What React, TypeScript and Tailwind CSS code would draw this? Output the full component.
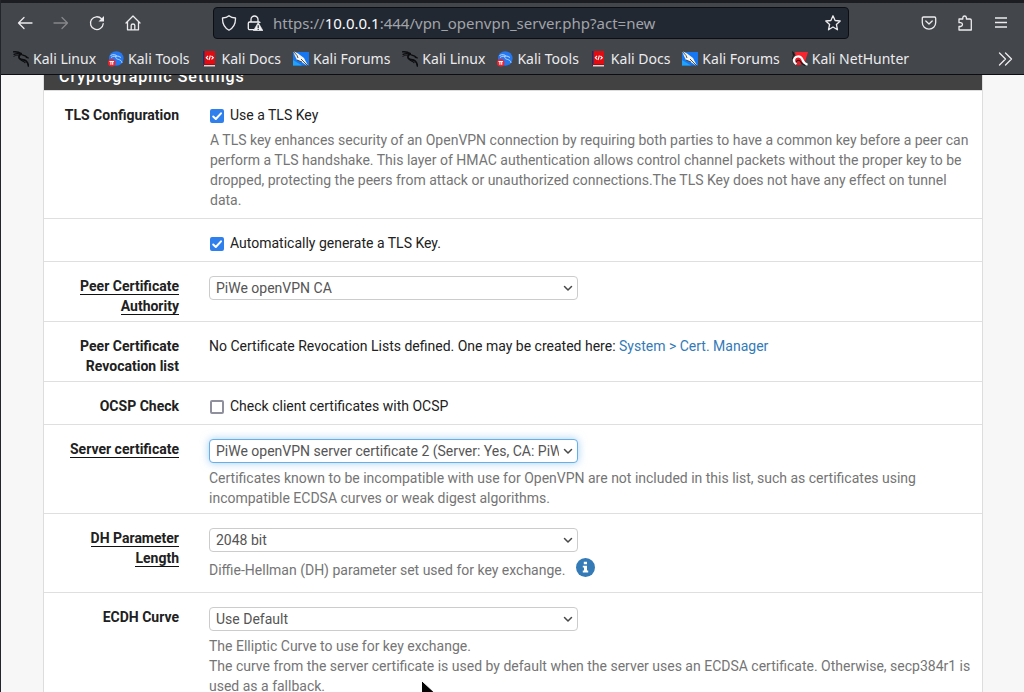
import React from "react";

type BookmarkKind = "linux" | "tools" | "docs" | "forums" | "nethunter";

function DragonIcon() {
  return (
    <svg viewBox="0 0 16 16" className="size-4 shrink-0" aria-hidden="true" fill="none" stroke="#0c0d10" strokeLinecap="round">
      <path d="M0 .9C3 .5 6 1 8.300 2.800" strokeWidth="1.300" />
      <path d="M1 3.300C3.500 2.400 6 2.600 8.500 3.300" strokeWidth="1.300" />
      <path d="M.8 5.300C2.800 4 5 4 6.800 4.400" strokeWidth=".8" />
      <path d="M8 2.500C6 4.200 5.300 6.200 6.600 7.600C8 9 11 8.200 13 9.800C14.700 11.200 15.200 13 15.500 15" strokeWidth="1.700" />
      <path d="M8 3.500C10 4.300 12.500 4.400 14.400 6.300M13.200 6.500L15.300 6.800M7 7.500C8 10.500 10.500 9.800 12 11.500" strokeWidth="1.200" />
    </svg>
  );
}

function ToolsIcon() {
  return (
    <svg viewBox="0 0 16 16" className="size-4 shrink-0" aria-hidden="true">
      <circle cx="8.300" cy="7.500" r="7.300" fill="#2478f2" />
      <path d="M2.500 4.500C5 3 8 3.500 9.500 5.500M3 6.500C5 5 7 5 8.500 5.500M8 5C7 8 9.500 8 11.500 8.800S14 11 14 12M9.500 4.800L13 6.500" fill="none" stroke="#c9e0ff" strokeWidth=".9" />
      <circle cx="3.800" cy="11.800" r="3.800" fill="#ed2430" />
      <path d="M1.500 10.500H6M2.900 10.500V13.800M4.700 10.500V13.800" stroke="#fff" strokeWidth="1.100" />
    </svg>
  );
}

function DocsIcon() {
  return (
    <svg viewBox="0 0 16 16" className="size-4 shrink-0" aria-hidden="true">
      <path d="M1 0H3V15H1Z" fill="#14316b" />
      <path d="M2.500 0H13V13H2.500Z" fill="#e20b12" />
      <path d="M2 13.500H13V15.500H2Z" fill="#d5d5d8" />
      <path d="M1 13H13V14H1Z" fill="#9b1018" />
      <path d="M6 5L4.300 6.700L6 8.400M9.500 5L11.300 6.700L9.500 8.400M8.400 4.500L7 9" fill="none" stroke="#fff" strokeWidth="1.100" />
    </svg>
  );
}

function ForumsIcon() {
  return (
    <svg viewBox="0 0 16 16" className="size-4 shrink-0" aria-hidden="true">
      <path d="M0 1H16V14.500H0Z" fill="#1777f2" />
      <path d="M0 14.500V9L9 14.500Z" fill="#20a3f8" />
      <path d="M0 0L5 2.500L11 7L12.500 10L15.500 15.500L9.500 11.500L4 9L2 5Z" fill="#f5f5f3" />
      <path d="M0 0L4 4.500L5 7M8 8L15.500 15.500M4 9L9 11" stroke="#242424" strokeWidth=".8" fill="none" />
    </svg>
  );
}

function NetHunterIcon() {
  return (
    <svg viewBox="0 0 16 16" className="size-4 shrink-0" aria-hidden="true">
      <path d="M3 1H16L12.500 12L8 7H4Z" fill="#f8252f" />
      <path d="M0 0L2 1.500L2.500 4L1 5" fill="#171819" />
      <path d="M3 3.500C1.500 4.500.5 6 .5 8" fill="none" stroke="#171819" strokeWidth="1" />
      <circle cx="6.500" cy="9" r="5.200" fill="#e51b28" />
      <path d="M4.500 13C.5 10.500 1.500 6.500 5.500 5.500C9.500 5 10.300 8 11 10C11.800 12 13.200 13 15.500 13.700" fill="none" stroke="#fff" strokeWidth="2.200" />
      <path d="M4 11.500C5 9 7.500 8.500 8.500 10.500S10.500 13.500 13 14.500" fill="none" stroke="#171819" strokeWidth="1.100" />
    </svg>
  );
}

const bookmarkIcons: Record<BookmarkKind, React.ReactElement> = {
  linux: <DragonIcon />,
  tools: <ToolsIcon />,
  docs: <DocsIcon />,
  forums: <ForumsIcon />,
  nethunter: <NetHunterIcon />,
};

const bookmarks: { kind: BookmarkKind; text: string }[] = [
  { kind: "linux", text: "Kali Linux" },
  { kind: "tools", text: "Kali Tools" },
  { kind: "docs", text: "Kali Docs" },
  { kind: "forums", text: "Kali Forums" },
  { kind: "linux", text: "Kali Linux" },
  { kind: "tools", text: "Kali Tools" },
  { kind: "docs", text: "Kali Docs" },
  { kind: "forums", text: "Kali Forums" },
  { kind: "nethunter", text: "Kali NetHunter" },
];

function LineIcon({ children }: { children: React.ReactNode }) {
  return (
    <svg viewBox="0 0 16 16" className="size-4 shrink-0" fill="none" stroke="currentColor" strokeWidth="1.300" strokeLinecap="round" strokeLinejoin="round" aria-hidden="true">
      {children}
    </svg>
  );
}

function BrowserChrome() {
  return (
    <header className="shrink-0 border-t-3 border-b border-t-[#1b1d23] border-b-[#0c0d11] bg-[#43464b] font-['Noto_Sans',sans-serif] text-[#ececee]">
      <div className="flex h-10 items-center pr-[15px] pl-4">
        <div className="flex w-[196px] shrink-0 items-center gap-5">
          <button aria-label="Back">
            <LineIcon><path d="M15 8H1.500M7 2.500L1.500 8L7 13.500" /></LineIcon>
          </button>
          <button aria-label="Forward" className="text-[#85878b]">
            <LineIcon><path d="M1 8H14.500M9 2.500L14.500 8L9 13.500" /></LineIcon>
          </button>
          <button aria-label="Reload">
            <LineIcon>
              <path d="M14.200 8.700A6.400 6.400 0 1 1 12.500 3.800" />
              <path d="M15 1V6.500H9.500Z" fill="currentColor" stroke="none" />
            </LineIcon>
          </button>
          <button aria-label="Home">
            <LineIcon><path d="M1 8L8 1L15 8M2.500 7V14.800H13.500V7M6.200 14.500V10.200Q6.200 9 8 9T9.800 10.200V14.500" /></LineIcon>
          </button>
        </div>
        <div className="flex h-8 w-[636px] min-w-0 items-center gap-2.5 rounded border border-[#0c0e13] bg-[#222831] px-[7px]">
          <LineIcon><path d="M8 .8C6.500 2.200 4 3 1.500 3C1.300 8.500 3 12.500 8 15.200C13 12.500 14.700 8.500 14.500 3C12 3 9.500 2.200 8 .8Z" /></LineIcon>
          <svg viewBox="0 0 16 16" className="size-4 shrink-0" aria-hidden="true">
            <path d="M4 7V4.500A3.500 3.500 0 0 1 11 4.500V7M7 14.600H2.800Q1.300 14.600 1.300 13.200V8.300Q1.300 7 2.700 7H12Q13 7 13 8" fill="none" stroke="#f0f0f2" strokeWidth="1.300" />
            <path d="M11.200 7.500L16 15.800H6.400Z" fill="#f0f0f2" stroke="#f0f0f2" strokeWidth=".6" strokeLinejoin="round" />
            <path d="M11.200 10.200V12.900M11.200 13.700V14.900" stroke="#222831" strokeWidth="1.200" />
          </svg>
          <span className="grow truncate text-[15px] leading-5 text-[#a1a4aa]">
            https://<span className="text-[#fbfbfe]">10.0.0.1</span>:444/vpn_openvpn_server.php?act=new
          </span>
          <button aria-label="Bookmark this page">
            <LineIcon><path d="M8 .8L10.100 5.500L15.200 6L11.400 9.500L12.500 14.800L8 12L3.500 14.800L4.600 9.500L.8 6L5.900 5.500Z" /></LineIcon>
          </button>
        </div>
        <div className="ml-auto flex shrink-0 items-center gap-5">
          <button aria-label="Save to Pocket">
            <LineIcon><path d="M2.500 2H13.500Q14.700 2 14.700 3.200V7.500A6.700 6.700 0 0 1 1.300 7.500V3.200Q1.300 2 2.500 2ZM4.800 6L8 9L11.200 6" /></LineIcon>
          </button>
          <button aria-label="Extensions">
            <LineIcon><path d="M2 4H5.800V2.700Q6 1 7.600 1T9.400 2.700V4H13Q14.300 4 14.300 5.200V15H2V11.500H3.600Q5.500 11.300 5.500 9.600T3.600 7.700H2V4" /></LineIcon>
          </button>
          <button aria-label="Open menu">
            <LineIcon><path d="M2 3H14M2 7.500H14M2 12H14" strokeLinecap="butt" /></LineIcon>
          </button>
        </div>
      </div>
      <nav aria-label="Bookmarks" className="flex h-[31px] items-center pr-[11px] pl-3 text-[14px] leading-5">
        <div className="flex min-w-0 grow gap-3 overflow-hidden">
          {bookmarks.map((b, i) => (
            <a key={i} href="#" className="flex shrink-0 items-center gap-1 whitespace-nowrap">
              {bookmarkIcons[b.kind]}
              {b.text}
            </a>
          ))}
        </div>
        <button aria-label="More bookmarks">
          <LineIcon><path d="M2.500 2L8.500 8L2.500 14M8.500 2L14.500 8L8.500 14" /></LineIcon>
        </button>
      </nav>
    </header>
  );
}

function Row({ label, htmlFor, required, tight, children }: {
  label?: string;
  htmlFor?: string;
  required?: boolean;
  tight?: boolean;
  children: React.ReactNode;
}) {
  const text = <span className={required ? "border-b border-[#111111]" : ""}>{label}</span>;
  return (
    <div className={`flex gap-[30px] border-b border-[#dfdfdf] pt-3.5 pr-2 ${tight ? "pb-[5px]" : "pb-2"}`}>
      <div className="w-[135px] shrink-0 pl-5 text-right font-bold">
        {htmlFor ? <label htmlFor={htmlFor}>{text}</label> : text}
      </div>
      <div className="min-w-0 grow">{children}</div>
    </div>
  );
}

function Check({ label, checked }: { label: string; checked?: boolean }) {
  return (
    <label className="flex items-center gap-1.5 pl-px">
      <span className="grid size-3.5 shrink-0 translate-y-px">
        <input
          type="checkbox"
          defaultChecked={checked}
          className="peer col-start-1 row-start-1 size-3.5 appearance-none rounded-xs border-2 border-[#8f8f9d] bg-white checked:border-[#2f80ed] checked:bg-[#2f80ed]"
        />
        <svg viewBox="0 0 14 14" className="pointer-events-none invisible col-start-1 row-start-1 size-3.5 peer-checked:visible" fill="none" stroke="#fff" strokeWidth="2" strokeLinecap="round" strokeLinejoin="round" aria-hidden="true">
          <path d="M3.200 7.500L5.800 10L11 4.300" />
        </svg>
      </span>
      {label}
    </label>
  );
}

function Select({ id, value, active }: { id: string; value: string; active?: boolean }) {
  return (
    <div className="grid w-[369px] max-w-full items-center">
      <select
        id={id}
        className={`col-start-1 row-start-1 h-6 w-full appearance-none rounded border bg-white pr-[18px] pl-1.5 text-[14px] text-[#555555] outline-none ${active ? "border-[#66afe9] shadow-[0_0_8px_rgba(102,175,233,0.6)]" : "border-[#cccccc]"}`}
      >
        <option>{value}</option>
      </select>
      <svg viewBox="0 0 10 10" className="pointer-events-none col-start-1 row-start-1 mr-[5px] size-2.5 justify-self-end" fill="none" stroke="#484848" strokeWidth="1.500" strokeLinecap="round" strokeLinejoin="round" aria-hidden="true">
        <path d="M1.500 3.500L5 7L8.500 3.500" />
      </svg>
    </div>
  );
}

export default function App() {
  return (
    <div className="flex h-screen flex-col overflow-hidden border-l border-[#22252c] bg-[#f7f7f7] font-[Roboto,sans-serif] text-[14px] leading-5 text-[#212121]">
      <BrowserChrome />
      <main className="min-h-0 grow overflow-hidden pr-[41px] pl-[42px]">
        <section className="-mt-2 border-x border-[#dddddd] bg-white">
          <h2 className="h-[23px] bg-[#424242] px-[15px] text-[16px] leading-5 font-medium tracking-[1px] text-white">
            Cryptographic Settings
          </h2>
          <div className="border-t border-[#dddddd]">
            <Row label="TLS Configuration">
              <Check label="Use a TLS Key" checked />
              <p className="mt-[5px] pl-px text-[#757575]">
                A TLS key enhances security of an OpenVPN connection by requiring both parties to have a common key before a peer can perform a TLS handshake. This layer of HMAC authentication allows control channel packets without the proper key to be dropped, protecting the peers from attack or unauthorized connections.The TLS Key does not have any effect on tunnel data.
              </p>
            </Row>
            <Row>
              <Check label="Automatically generate a TLS Key." checked />
            </Row>
            <Row label="Peer Certificate Authority" htmlFor="peer-ca" required tight>
              <Select id="peer-ca" value="PiWe openVPN CA" />
            </Row>
            <Row label="Peer Certificate Revocation list" tight>
              No Certificate Revocation Lists defined. One may be created here:{" "}
              <a href="#" className="text-[#337ab7]">System &gt; Cert. Manager</a>
            </Row>
            <Row label="OCSP Check">
              <Check label="Check client certificates with OCSP" />
            </Row>
            <Row label="Server certificate" htmlFor="server-cert" required tight>
              <Select id="server-cert" value="PiWe openVPN server certificate 2 (Server: Yes, CA: PiWe openVPN CA)" active />
              <p className="mt-[5px] text-[#757575]">
                Certificates known to be incompatible with use for OpenVPN are not included in this list, such as certificates using incompatible ECDSA curves or weak digest algorithms.
              </p>
            </Row>
            <Row label="DH Parameter Length" htmlFor="dh-length" required>
              <Select id="dh-length" value="2048 bit" />
              <div className="mt-[5px] flex h-[27px] items-start gap-2.5 text-[#757575]">
                <p className="pt-[3px]">Diffie-Hellman (DH) parameter set used for key exchange.</p>
                <button aria-label="More information">
                  <svg viewBox="0 0 20 20" className="size-5" aria-hidden="true">
                    <circle cx="10.500" cy="10.500" r="9.500" fill="#337ab7" />
                    <path d="M8.800 4.700H12V7.200H8.800ZM7.800 8.700H12V13.500H13.200V15.500H7.800V13.500H9V10.500H7.800Z" fill="#fff" />
                  </svg>
                </button>
              </div>
            </Row>
            <Row label="ECDH Curve" htmlFor="ecdh-curve">
              <Select id="ecdh-curve" value="Use Default" />
              <p className="mt-[5px] text-[#757575]">
                The Elliptic Curve to use for key exchange.<br />
                The curve from the server certificate is used by default when the server uses an ECDSA certificate. Otherwise, secp384r1 is used as a fallback.
              </p>
            </Row>
          </div>
        </section>
      </main>
      <svg viewBox="0 0 14 20" className="pointer-events-none absolute top-[680px] left-[421px] h-3 w-3.5" preserveAspectRatio="xMinYMin slice" aria-hidden="true">
        <path d="M.5.500V18L5 14L8 20L11 18L8 12.500H13.500Z" fill="#050505" stroke="#fff" />
      </svg>
    </div>
  );
}
